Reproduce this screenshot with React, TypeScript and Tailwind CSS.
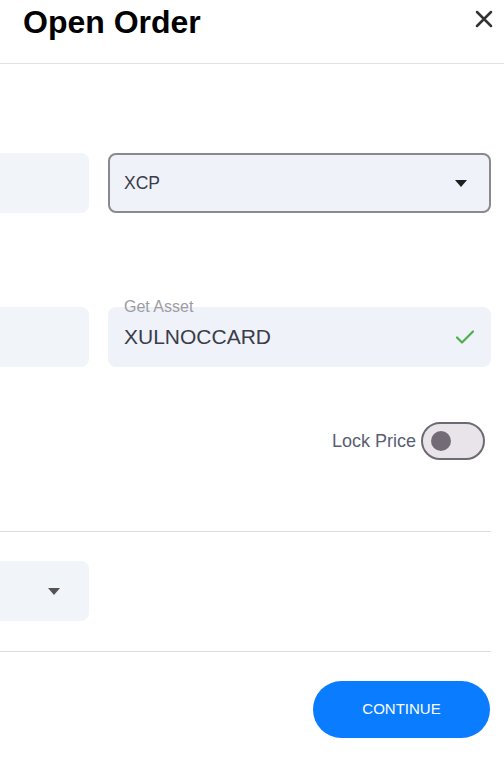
import React, { useState } from 'react';

const Caret = ({ className }: { className?: string }) => (
  <svg width="12" height="7" viewBox="0 0 12 7" className={className}>
    <path d="M0 0h12L6 7z" fill="currentColor" />
  </svg>
);

const App: React.FC = () => {
  const [locked, setLocked] = useState(false);

  return (
    <div className="w-[504px] h-[758px] overflow-hidden bg-white font-['Liberation_Sans',Arial,sans-serif]">
      {/* header */}
      <div className="h-[64px] border-b border-[#e2e2e2] flex items-start justify-between pl-[23px] pr-[11px]">
        <h2 className="pt-[3px] text-[32px] leading-[38px] font-bold text-black">Open Order</h2>
        <button className="mt-[10px] text-[#333]">
          <svg width="18" height="18" viewBox="0 0 18 18">
            <path d="M2 2l14 14M16 2L2 16" stroke="currentColor" strokeWidth="2.5" strokeLinecap="round" />
          </svg>
        </button>
      </div>

      <div className="pr-[13px]">
        {/* give / currency */}
        <div className="mt-[89px] flex justify-end gap-[19px]">
          <div className="w-[383px] shrink-0 h-[60px] rounded-lg bg-[#f1f4f9]"></div>
          <div className="w-[383px] shrink-0 h-[60px] rounded-lg bg-[#eff2f8] border-2 border-[#8a8a8e] flex items-center justify-between pl-[14px] pr-[22px]">
            <span className="text-[17.5px] text-[#3b3d4a]">XCP</span>
            <Caret className="text-[#1f1f1f]" />
          </div>
        </div>

        {/* get asset */}
        <div className="mt-[94px] flex justify-end gap-[19px]">
          <div className="w-[383px] shrink-0 h-[60px] rounded-lg bg-[#f1f4f9]"></div>
          <div className="w-[383px] shrink-0 h-[60px] rounded-lg bg-[#eff2f8] relative flex items-center justify-between pl-[16px] pr-[16px]">
            <span className="absolute left-[16px] top-[-10px] text-[16px] leading-[19px] text-[#9c9ca4]">Get Asset</span>
            <span className="text-[21px] text-[#3b3d4a]">XULNOCCARD</span>
            <svg width="20" height="16" viewBox="0 0 20 16">
              <path d="M2 8.5l5 5L18 2.5" fill="none" stroke="#4caf50" strokeWidth="2.2" strokeLinecap="round" strokeLinejoin="round" />
            </svg>
          </div>
        </div>

        {/* lock price */}
        <div className="mt-[55px] flex items-center justify-end gap-[5px] pr-[6px]">
          <span className="text-[18px] text-[#5a5e72]">Lock Price</span>
          <button
            onClick={() => setLocked(!locked)}
            className="w-[64px] h-[38px] rounded-full border-2 border-[#6e6a72] bg-[#e9e3ea] flex items-center px-[8px]"
          >
            <span className="w-[20px] h-[20px] rounded-full bg-[#736c77]"></span>
          </button>
        </div>

        <div className="mt-[71px] border-t border-[#dcdcdc]"></div>

        {/* fee */}
        <div className="mt-[29px] flex justify-end gap-[19px]">
          <div className="w-[383px] shrink-0 h-[60px] rounded-lg bg-[#f1f4f9] flex items-center justify-end pr-[29px]">
            <Caret className="text-[#545454]" />
          </div>
          <div className="w-[383px] shrink-0 h-[60px]"></div>
        </div>

        <div className="mt-[30px] border-t border-[#dcdcdc]"></div>

        <div className="mt-[29px] flex justify-end pr-px">
          <button className="w-[177px] h-[57px] rounded-full bg-[#0a7cff] text-white text-[15px]">CONTINUE</button>
        </div>
      </div>
    </div>
  );
};

export default App;
